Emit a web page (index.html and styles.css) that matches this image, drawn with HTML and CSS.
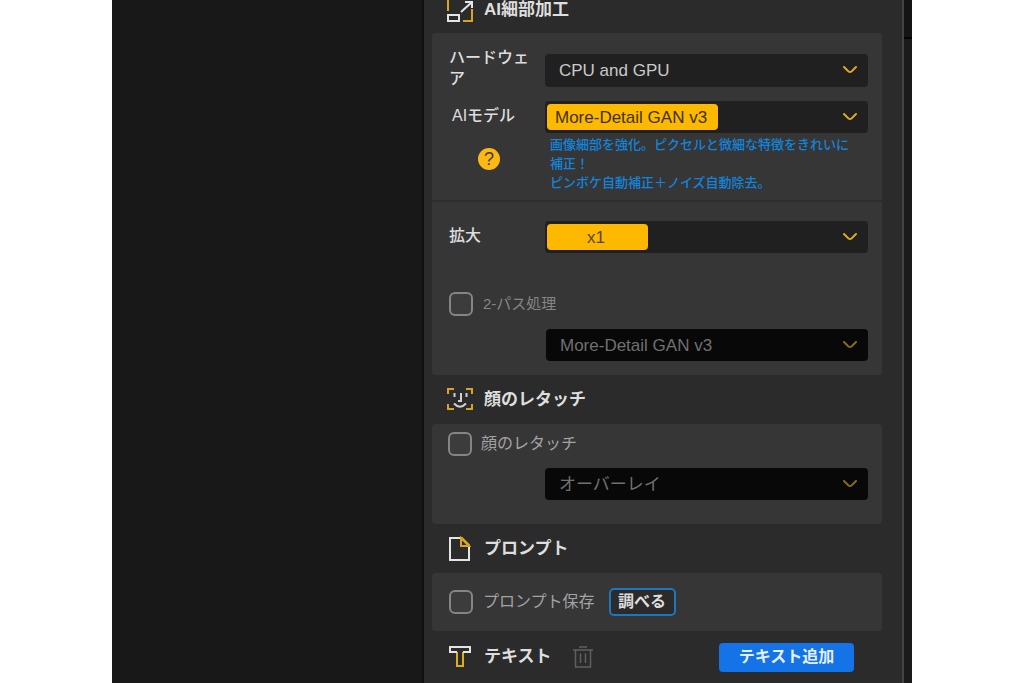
FILE: index.html
```html
<!DOCTYPE html>
<html lang="ja">
<head>
<meta charset="utf-8">
<meta name="viewport" content="width=device-width, initial-scale=1">
<title>AI細部加工</title>
<link rel="stylesheet" href="styles.css">
</head>
<body>
<div class="app">
  <main class="preview"></main>
  <aside class="panel">
    <header class="section-head section-head--first">
      <svg class="icon" viewBox="0 0 28 28" fill="none" stroke-width="2">
        <path d="M2 15V2H11M26 13V25H17" stroke="#d9a520"/>
        <path d="M2 19H13V25H2ZM15 16L26 6M19 6H26V12" stroke="#e4e4e4"/>
      </svg>
      <h2 class="section-title">AI細部加工</h2>
    </header>
    <section class="card">
      <div class="group group--model">
        <div class="field field--hardware">
          <label class="label" for="hardware">ハードウェア</label>
          <div class="picker">
            <select id="hardware"><option>CPU and GPU</option></select>
            <svg class="chevron" viewBox="0 0 14 8"><path d="M1 1L5.500 5.500Q7 6.500 8.500 5.500L13 1"/></svg>
          </div>
        </div>
        <div class="field">
          <div class="label-stack">
            <label class="label label--model" for="model">AIモデル</label>
            <button class="help" type="button" aria-label="ヘルプ">?</button>
          </div>
          <div>
            <div class="picker picker--model">
              <select id="model"><option>More-Detail GAN v3</option></select>
              <svg class="chevron" viewBox="0 0 14 8"><path d="M1 1L5.500 5.500Q7 6.500 8.500 5.500L13 1"/></svg>
            </div>
            <p class="hint">画像細部を強化。ピクセルと微細な特徴をきれいに補正！<br>ピンボケ自動補正＋ノイズ自動除去。</p>
          </div>
        </div>
      </div>
      <div class="group group--scale">
        <div class="field field--middle">
          <label class="label" for="scale">拡大</label>
          <div class="picker picker--scale">
            <select id="scale"><option>x1</option></select>
            <svg class="chevron" viewBox="0 0 14 8"><path d="M1 1L5.500 5.500Q7 6.500 8.500 5.500L13 1"/></svg>
          </div>
        </div>
        <label class="check check--small"><input type="checkbox">2-パス処理</label>
        <div class="picker picker--off">
          <select aria-label="2-パス処理のモデル" disabled><option>More-Detail GAN v3</option></select>
          <svg class="chevron" viewBox="0 0 14 8"><path d="M1 1L5.500 5.500Q7 6.500 8.500 5.500L13 1"/></svg>
        </div>
      </div>
    </section>

    <header class="section-head">
      <svg class="icon" viewBox="0 0 28 28" fill="none" stroke-width="2">
        <path d="M2 8V3H8M20 3H26V8M2 18V23H8M20 23H26V18" stroke="#d9a520"/>
        <path d="M8.500 7V11M20.500 7V11M15 7V15H12M8 17.500Q14 24 20 17.500" stroke="#d0d0d0"/>
      </svg>
      <h2 class="section-title">顔のレタッチ</h2>
    </header>
    <section class="card card--face">
      <label class="check"><input type="checkbox">顔のレタッチ</label>
      <div class="picker picker--off">
        <select aria-label="顔のレタッチの方式" disabled><option>オーバーレイ</option></select>
        <svg class="chevron" viewBox="0 0 14 8"><path d="M1 1L5.500 5.500Q7 6.500 8.500 5.500L13 1"/></svg>
      </div>
    </section>

    <header class="section-head">
      <svg class="icon" viewBox="0 0 28 28" fill="none" stroke-width="2">
        <path d="M15 3H4V25H23V11" stroke="#e4e4e4"/>
        <path d="M15 3V11H23ZM15 3H16L23 10V11" stroke="#d9a520"/>
      </svg>
      <h2 class="section-title">プロンプト</h2>
    </header>
    <section class="card card--prompt">
      <label class="check"><input type="checkbox">プロンプト保存</label>
      <button class="outline-button" type="button">調べる</button>
    </section>

    <header class="section-head section-head--last">
      <svg class="icon" viewBox="0 0 28 28" fill="none" stroke-width="2">
        <path d="M11 9V23H17V9" stroke="#e0ad1a"/>
        <path d="M11 9H4V4H24V9H17" stroke="#e4e4e4"/>
      </svg>
      <h2 class="section-title">テキスト</h2>
      <button class="trash" type="button" aria-label="削除">
        <svg viewBox="0 0 22 22" fill="none" stroke="#606060" stroke-width="1.500"><path d="M1 4H21M7 1H15M3.500 4V21H18.500V4M8.500 7.500V17M13.500 7.500V17"/></svg>
      </button>
      <button class="primary-button" type="button">テキスト追加</button>
    </header>
  </aside>
  <div class="gutter"></div>
</div>
</body>
</html>
```
FILE: styles.css
```css
* {
  box-sizing: border-box;
}

body {
  margin: 0;
  background: #fff;
  color: #dedede;
  font-family: "Liberation Sans", "Noto Sans CJK JP", sans-serif;
  font-size: 16px;
}

button,
select {
  margin: 0;
  font: inherit;
}

.app {
  display: grid;
  grid-template-columns: 39% 1fr 8px;
  width: 78.125%;
  min-height: 100vh;
  margin: 0 auto;
  background: #181818;
}

.preview {
  border-right: 2px solid #101010;
}

.panel {
  padding: 0 20px 0 8px;
  border-right: 2px solid #424242;
  background: #2b2b2b;
  overflow: hidden;
}

.gutter {
  background: linear-gradient(#141414 37px, #050505 37px, #050505 39px, #1a1a1a 39px);
}

.section-head {
  display: flex;
  align-items: center;
  height: 49px;
  padding: 0 28px 0 14px;
}

.section-head--first {
  height: 47px;
  margin-top: -14px;
}

.section-head--last {
  height: 52px;
}

.icon {
  width: 28px;
  height: 28px;
  margin-right: 10px;
}

.section-title {
  margin: 0;
  font-size: 17px;
  line-height: 24px;
  font-weight: 700;
}

.card {
  border-radius: 4px;
  background: #363636;
}

.group {
  padding: 0 14px 0 17px;
}

.group--model {
  padding-top: 14px;
  padding-bottom: 8px;
  border-bottom: 2px solid #2d2d2d;
}

.group--scale {
  padding-top: 19px;
  padding-bottom: 14px;
}

.field {
  display: grid;
  grid-template-columns: 80px 1fr;
  column-gap: 16px;
}

.field--hardware {
  margin-bottom: 12px;
}

.field--hardware .picker {
  margin-top: 7px;
}

.label {
  line-height: 21px;
  font-weight: 500;
}

.field--middle .label {
  padding-top: 4px;
}

.label-stack {
  display: flex;
  flex-direction: column;
  align-items: center;
  gap: 22px;
  padding-top: 4px;
}

.label--model {
  align-self: flex-start;
  padding-left: 3px;
}

.help {
  width: 22px;
  height: 22px;
  padding: 0;
  border: 0;
  border-radius: 50%;
  background: #fdb913;
  color: #4a3a12;
  font-size: 18px;
  line-height: 22px;
}

.picker {
  position: relative;
  height: 33px;
  border-radius: 4px;
  background: #202020;
}

.picker select {
  position: relative;
  width: 100%;
  height: 100%;
  padding: 0 30px 0 14px;
  border: 0;
  appearance: none;
  background: transparent;
  color: #cacaca;
  font-size: 17px;
  opacity: 1;
}

.picker--model,
.picker--scale {
  height: 32px;
}

.picker--model::before,
.picker--scale::before {
  position: absolute;
  top: 3px;
  left: 2px;
  width: 171px;
  height: 26px;
  border-radius: 4px;
  background: #fdb900;
  content: "";
}

.picker--scale::before {
  width: 101px;
}

.picker--model select {
  padding-left: 10px;
  color: #3f3005;
}

.picker--scale select {
  padding-left: 42px;
  color: #5c4604;
}

.picker--off {
  height: 32px;
  margin-left: 97px;
  background: #080808;
}

.picker--off select {
  color: #707070;
}

.chevron {
  position: absolute;
  top: 12px;
  right: 11px;
  width: 14px;
  height: 8px;
  fill: none;
  stroke: #dba829;
  stroke-width: 2;
  stroke-linecap: round;
  pointer-events: none;
}

.picker--off .chevron {
  stroke: #896a1c;
}

.hint {
  max-width: 312px;
  margin: 2px 0 0;
  padding-left: 5px;
  color: #1284dc;
  font-size: 13px;
  font-weight: 500;
  line-height: 19px;
}

.check {
  display: flex;
  align-items: center;
  gap: 10px;
  color: #a3a3a3;
  line-height: 24px;
}

.check input {
  width: 24px;
  height: 24px;
  margin: 0;
  border: 2px solid #858585;
  border-radius: 6px;
  appearance: none;
  background: #3c3c3c;
}

.check--small {
  margin: 39px 0 13px;
  color: #858585;
  font-size: 15px;
}

.card--face {
  padding: 8px 14px 24px 16px;
}

.card--face .check {
  gap: 9px;
}

.card--face .picker {
  margin-top: 12px;
}

.card--prompt {
  display: flex;
  align-items: center;
  gap: 14px;
  height: 58px;
  padding: 0 17px;
}

.outline-button {
  width: 67px;
  height: 28px;
  padding: 0;
  border: 2px solid #1d77bd;
  border-radius: 5px;
  background: #2b2b2b;
  color: #dedede;
  font-weight: 700;
  line-height: 22px;
}

.trash {
  width: 22px;
  height: 22px;
  margin-left: 20px;
  padding: 0;
  border: 0;
  background: none;
}

.trash svg {
  display: block;
}

.primary-button {
  width: 135px;
  height: 29px;
  margin-left: auto;
  padding: 0;
  border: 0;
  border-radius: 4px;
  background: #1473e6;
  color: #e6effc;
  font-weight: 700;
  line-height: 28px;
}
```
